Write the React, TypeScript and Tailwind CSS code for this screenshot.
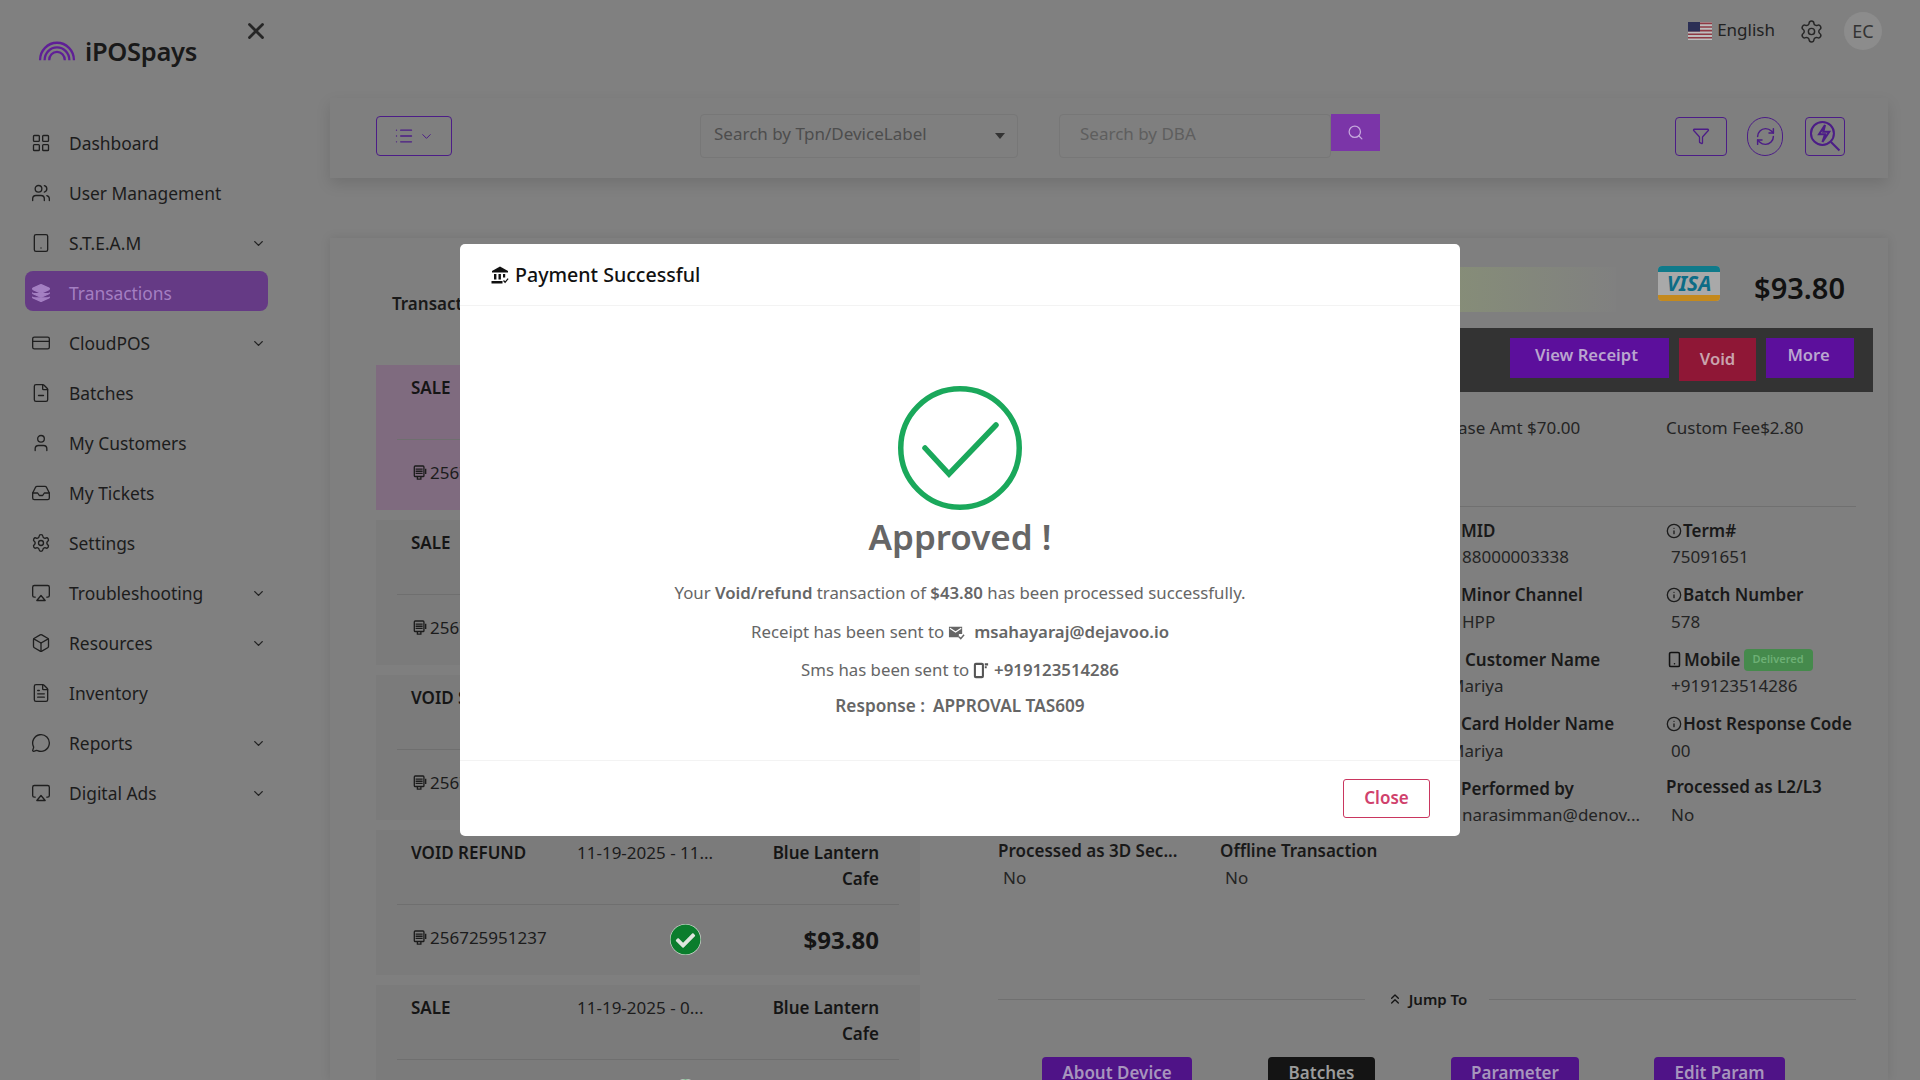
import React from "react";
import {
  LayoutGrid, Users, Tablet, Layers, CreditCard, FileMinus, User, Inbox, Settings, Airplay, Box, FileText,
  MessageCircle, ChevronDown, X, List, Filter, RefreshCw, Search, Smartphone, Info, ChevronsUp,
} from "lucide-react";
import { FaCheckCircle } from "react-icons/fa";

const nav: [string, any, boolean][] = [
  ["Dashboard", LayoutGrid, false],
  ["User Management", Users, false],
  ["S.T.E.A.M", Tablet, true],
  ["Transactions", Layers, false],
  ["CloudPOS", CreditCard, true],
  ["Batches", FileMinus, false],
  ["My Customers", User, false],
  ["My Tickets", Inbox, false],
  ["Settings", Settings, false],
  ["Troubleshooting", Airplay, true],
  ["Resources", Box, true],
  ["Inventory", FileText, false],
  ["Reports", MessageCircle, true],
  ["Digital Ads", Airplay, true],
];

function Terminal() {
  return (
    <svg viewBox="0 0 16 18" className="h-[16px] w-[14px] shrink-0" fill="none" stroke="#1c1c1c" strokeWidth="1.5">
      <rect x="1.5" y="1" width="11" height="12" rx="1" />
      <path d="M3 4.5h8M3 7h8M3 9.5h8M5 13v3h4v-3M14.5 4v6" />
    </svg>
  );
}

function Logo() {
  return (
    <svg viewBox="0 0 40 24" className="h-[22px] w-[38px]" fill="none" stroke="#5f1f96" strokeWidth="2.5">
      <path d="M1.5 22a18.5 19 0 0 1 37 0" />
      <path d="M6.5 22a13.5 14 0 0 1 27 0" />
      <path d="M11.5 22a8.5 9 0 0 1 17 0" />
    </svg>
  );
}

function Flag() {
  return (
    <svg viewBox="0 0 24 18" className="h-[18px] w-[24px]">
      <rect width="24" height="18" fill="#bdbdbd" />
      <path d="M0 1.4h24M0 5h24M0 8.6h24M0 12.2h24M0 15.8h24" stroke="#8e3a44" strokeWidth="1.6" />
      <rect width="12" height="9.5" fill="#2b2f55" />
    </svg>
  );
}

function ZapSearch() {
  return (
    <svg viewBox="0 0 40 40" className="h-[34px] w-[34px]" fill="none" stroke="#4c1d87" strokeWidth="2.4">
      <circle cx="17" cy="17" r="13.5" />
      <path d="M20 7l-7 11h7l-3 9 8-12h-7z" />
      <path d="M27 27l10 10" />
    </svg>
  );
}

function Bank() {
  return (
    <svg viewBox="0 0 18 18" className="h-[18px] w-[18px]" fill="#111">
      <path d="M9 0.5l8 4.5v1.5H1V5z" />
      <rect x="3" y="8" width="2.4" height="5.5" />
      <rect x="7.5" y="8" width="2.4" height="5.5" />
      <rect x="0.5" y="15" width="11" height="2.5" />
      <path d="M12.5 14.5l1.6 1.8 3-3.6" fill="none" stroke="#111" strokeWidth="1.3" />
      <rect x="12" y="8" width="2.2" height="3.5" />
    </svg>
  );
}

function MailFilled() {
  return (
    <svg viewBox="0 0 18 18" className="ml-[4px] h-[17px] w-[17px]">
      <path d="M1 3h14v7.5h-3.5v3.5H1z" fill="#666" />
      <path d="M2 4.5l6 4 6-4" fill="none" stroke="#fff" strokeWidth="1.2" />
      <path d="M11.5 13.5l2 2 3.5-4" fill="none" stroke="#666" strokeWidth="1.6" />
    </svg>
  );
}

function PhoneSignal() {
  return (
    <svg viewBox="0 0 18 18" className="ml-[4px] h-[17px] w-[17px]" fill="none" stroke="#555">
      <rect x="2" y="2" width="8.5" height="14" rx="1" strokeWidth="2.2" />
      <path d="M12.5 2.5h3.5M12.5 5.5h2" strokeWidth="2.2" />
    </svg>
  );
}

function Item({ type, date, id, tone }: { type: string; date: string; id: string; tone: string }) {
  return (
    <div className={`h-[145px] mb-[10px] px-[21px] shrink-0 ${tone}`}>
      <div className="h-[75px] flex items-start pt-[10px] pl-[14px] pr-[20px] border-b border-[#6f6f6f] leading-[26px] text-[#151515]">
        <div className="w-[166px] font-semibold text-[17px]">{type}</div>
        <div className="w-[156px] text-[17px] text-[#1c1c1c] whitespace-nowrap">{date}</div>
        <div className="flex-1 text-right font-semibold text-[17px]">Blue Lantern<br />Cafe</div>
      </div>
      <div className="h-[69px] flex items-center pl-[14px] pr-[20px] text-[#1c1c1c]">
        <div className="w-[257px] flex items-center text-[17px] -mt-[4px] ml-[2px]"><Terminal /><span className="ml-[3px]">{id}</span></div>
        <FaCheckCircle className="h-[31px] w-[31px] text-[#0b7d2d] bg-[#dfe6df] rounded-full" />
        <div className="flex-1 text-right font-bold text-[24px] text-[#151515]">$93.80</div>
      </div>
    </div>
  );
}

function Field({ label, value, icon, valueClass = "ml-[5px]", labelClass = "", badge }: { label: string; value: string; icon?: React.ReactNode; valueClass?: string; labelClass?: string; badge?: boolean }) {
  return (
    <div className="w-[222px] h-[64.5px] shrink-0">
      <div className={`h-[27px] flex items-center font-semibold text-[17px] text-[#191919] whitespace-nowrap ${labelClass}`}>
        {icon}
        <span>{label}</span>
        {badge && <span className="ml-[3px] h-[22px] px-[9px] flex items-center rounded-sm bg-[#458a4c] text-[#6db075] text-[11px] font-semibold">Delivered</span>}
      </div>
      <div className={`h-[26px] flex items-center text-[17px] text-[#242424] whitespace-nowrap ${valueClass}`}>{value}</div>
    </div>
  );
}

const info = <Info className="h-[16px] w-[16px] mr-[1px] text-[#1c1c1c]" />;
const wideInfo = <Info className="h-[16px] w-[16px] mr-[5px] text-[#1c1c1c]" />;

export default function App() {
  return (
    <div className="relative flex h-[1080px] w-[1920px] overflow-hidden bg-[#808080] font-['Noto_Sans',sans-serif] text-[#1a1a1a]">
      {/* sidebar */}
      <aside className="w-[330px] shrink-0 flex flex-col pl-[25px]">
        <div className="relative h-[118px]">
          <div className="flex items-center pt-[32px] pl-[13px]">
            <Logo />
            <span className="ml-[9px] text-[25.5px] font-semibold tracking-[-0.3px] text-[#191919]">iPOSpays</span>
          </div>
          <X className="absolute left-[218px] top-[18px] h-[26px] w-[26px] text-[#262626]" strokeWidth={2.6} />
        </div>
        {nav.map(([name, Icon, chev]) => {
          const active = name === "Transactions";
          return (
            <div key={name} className={`flex h-[40px] w-[243px] items-center rounded-lg pl-[6px] pr-[2px] shrink-0 ${active ? "mt-[3px] mb-[7px] pt-[4px] bg-[#653a85]" : "my-[5px]"}`}>
              <Icon className={`h-[20px] w-[20px] shrink-0 ${active ? "text-[#a47fc2] fill-[#a47fc2]" : "text-[#1f1f1f]"}`} strokeWidth={1.6} />
              <span className={`ml-[18px] flex-1 text-[17.4px] ${active ? "text-[#a47fc2]" : "text-[#1c1c1c]"}`}>{name}</span>
              {chev && <ChevronDown className="h-[15px] w-[15px] text-[#222]" strokeWidth={2.2} />}
            </div>
          );
        })}
      </aside>

      {/* main */}
      <main className="flex-1 flex flex-col min-w-0">
        <div className="h-[98px] shrink-0 flex justify-end items-start pt-[12px] pr-[38px]">
          <div className="flex items-center mt-[8px] text-[17px] text-[#222]"><Flag /><span className="ml-[5px] -mt-[3px]">English</span></div>
          <Settings className="ml-[24px] mt-[7px] h-[25px] w-[25px] text-[#262626]" strokeWidth={1.4} />
          <div className="ml-[20px] h-[38px] w-[38px] rounded-full bg-[#8c8c8c] flex items-center justify-center text-[18px] text-[#333]">EC</div>
        </div>

        <div className="h-[80px] shrink-0 mr-[32px] flex items-center pb-[4px] pl-[46px] pr-[43px] bg-[#7f7f7f] shadow-[0_6px_14px_rgba(0,0,0,0.12)]">
          <div className="h-[40px] w-[76px] border border-[#4c1d87] rounded flex items-center justify-center gap-[5px]">
            <List className="h-[20px] w-[20px] text-[#4c1d87]" strokeWidth={1.6} />
            <ChevronDown className="h-[15px] w-[15px] text-[#4c1d87]" strokeWidth={1.6} />
          </div>
          <div className="ml-[248px] h-[44px] w-[318px] border border-[#777] rounded-sm flex items-center justify-between pb-[4px] pl-[13px] pr-[12px] text-[17px] text-[#4d4d4d]">
            <span>Search by Tpn/DeviceLabel</span>
            <span className="mt-[4px] border-x-[5px] border-t-[6px] border-x-transparent border-t-[#333]" />
          </div>
          <div className="ml-[41px] h-[44px] w-[272px] border border-[#777] rounded-sm flex items-center pb-[4px] pl-[20px] text-[17px] text-[#5e5e5e]">Search by DBA</div>
          <div className="h-[37px] w-[49px] mb-[7px] bg-[#7b35a8] flex items-center justify-center">
            <Search className="h-[17px] w-[17px] text-[#c5a8dc]" strokeWidth={1.8} />
          </div>
          <div className="ml-auto h-[39px] w-[52px] border border-[#4c1d87] rounded-sm flex items-center justify-center">
            <Filter className="h-[18px] w-[18px] text-[#4c1d87]" strokeWidth={1.7} />
          </div>
          <div className="ml-[20px] h-[39px] w-[36px] border border-[#4c1d87] rounded-full flex items-center justify-center">
            <RefreshCw className="h-[21px] w-[21px] text-[#4c1d87]" strokeWidth={1.7} />
          </div>
          <div className="ml-[22px] h-[39px] w-[40px] border border-[#4c1d87] rounded-sm flex items-center justify-center">
            <ZapSearch />
          </div>
        </div>

        <div className="mt-[60px] mr-[32px] flex-1 min-h-0 flex overflow-hidden bg-[#7f7f7f] shadow-[0_0_10px_rgba(0,0,0,0.1)]">
          {/* list */}
          <div className="w-[590px] shrink-0 pl-[46px] flex flex-col">
            <div className="mt-[54px] h-[24px] shrink-0 ml-[16px] flex items-center text-[17px] font-semibold text-[#191919]">Transactions</div>
            <div className="mt-[49px] shrink-0">
              <Item type="SALE" date="11-19-2025 - 11..." id="256725951237" tone="bg-[#7f6b7f]" />
              <Item type="SALE" date="11-19-2025 - 11..." id="256725951237" tone="bg-[#7b7b7b]" />
              <Item type="VOID SALE" date="11-19-2025 - 11..." id="256725951237" tone="bg-[#7b7b7b]" />
              <Item type="VOID REFUND" date="11-19-2025 - 11..." id="256725951237" tone="bg-[#7b7b7b]" />
              <Item type="SALE" date="11-19-2025 - 0..." id="256725951237" tone="bg-[#7b7b7b]" />
            </div>
          </div>

          {/* detail */}
          <div className="ml-[61px] w-[892px] shrink-0 flex flex-col">
            <div className="h-[90px] shrink-0 flex items-start justify-end pr-[28px] pt-[28px]">
              <div className="h-[45px] w-[160px] mt-[1px] mr-[42px] bg-gradient-to-r from-[#868d78] to-[#808080]" />
              <div className="h-[35px] w-[62px] flex flex-col rounded-sm overflow-hidden bg-[#a9a9a9]">
                <div className="h-[6px] bg-[#0f7a8a]" />
                <div className="flex-1 flex items-center justify-center text-[21px] font-bold italic text-[#0d6c86] leading-none">VISA</div>
                <div className="h-[6px] bg-[#c4891d]" />
              </div>
              <div className="ml-[34px] text-[29px] font-semibold leading-none text-[#111] mt-[7px]">$93.80</div>
            </div>
            <div className="h-[64px] shrink-0 bg-[#333333] flex items-start justify-end pt-[10px] pr-[19px] gap-[9px] text-[16.6px] font-semibold text-[#b9a5cf]">
              <div className="h-[40px] w-[159px] bg-[#5c0f9c] flex items-center justify-center pb-[5px] pr-[6px]">View Receipt</div>
              <div className="h-[43px] w-[77px] ml-[1px] bg-[#8f1736] flex items-center justify-center text-[#c9a3ad]">Void</div>
              <div className="h-[40px] w-[88px] ml-[1px] bg-[#5c0f9c] flex items-center justify-center pb-[5px] pr-[3px]">More</div>
            </div>
            <div className="h-[115px] shrink-0 border-b border-[#707070] ml-[17px] mr-[17px]">
              <div className="flex pt-[23px] text-[17px] text-[#242424]">
                <div className="w-[446px]" />
                <div className="w-[222px] pl-[3px]">Base Amt $70.00</div>
                <div className="whitespace-nowrap">Custom Fee$2.80</div>
              </div>
            </div>
            <div className="ml-[17px] shrink-0 pt-[10px] w-[875px]">
              <div className="flex">
                <div className="w-[446px] shrink-0" />
                <div className="w-[444px] shrink-0 flex flex-wrap">
                  <Field label="MID" value="88000003338" icon={info} valueClass="ml-[18px]" />
                  <Field label="Term#" value="75091651" icon={info} />
                  <Field label="Minor Channel" value="HPP" icon={info} valueClass="ml-[18px]" />
                  <Field label="Batch Number" value="578" icon={info} />
                  <Field label="Customer Name" value="Mariya" icon={wideInfo} />
                  <Field label="Mobile" value="+919123514286" badge icon={<Smartphone className="h-[17px] w-[17px] mr-[1px] text-[#111]" strokeWidth={2.2} />} />
                  <Field label="Card Holder Name" value="Mariya" icon={info} />
                  <Field label="Host Response Code" value="00" icon={info} />
                  <Field label="Performed by" value="narasimman@denov..." icon={info} valueClass="ml-[18px]" />
                  <Field label="Processed as L2/L3" value="No" labelClass="-mt-[2px] mb-[2px]" />
                </div>
              </div>
              <div className="flex -mt-[2px]">
                <Field label="Processed as 3D Sec..." value="No" />
                <Field label="Offline Transaction" value="No" />
              </div>
            </div>
            <div className="ml-[17px] mr-[17px] shrink-0 mt-[86px] flex items-center gap-[22px] text-[15px] font-semibold text-[#151515]">
              <div className="flex-1 border-t border-[#707070]" />
              <div className="flex items-center gap-[6px]"><ChevronsUp className="h-[16px] w-[16px]" />Jump To</div>
              <div className="flex-1 border-t border-[#707070]" />
            </div>
            <div className="mt-[46px] ml-[61px] shrink-0 flex items-start text-[17px] font-semibold text-[#a795bd]">
              <div className="h-[40px] pb-[8px] w-[150px] rounded-sm bg-[#4f1387] flex items-center justify-center">About Device</div>
              <div className="h-[40px] pb-[8px] w-[107px] ml-[76px] rounded-sm bg-[#141414] flex items-center justify-center text-[#9b9b9b]">Batches</div>
              <div className="h-[40px] pb-[8px] w-[128px] ml-[76px] rounded-sm bg-[#4f1387] flex items-center justify-center">Parameter</div>
              <div className="h-[40px] pb-[8px] w-[131px] ml-[75px] rounded-sm bg-[#4f1387] flex items-center justify-center">Edit Param</div>
            </div>
          </div>
        </div>
      </main>

      {/* modal */}
      <div className="absolute left-[460px] top-[244px] w-[1000px] h-[592px] bg-white rounded-[5px] flex flex-col">
        <div className="h-[62px] shrink-0 border-b border-[#f3f3f3] flex items-center pl-[31px] pt-[1px] text-[#111]">
          <Bank />
          <span className="ml-[6px] text-[19.6px] font-medium">Payment Successful</span>
        </div>
        <div className="h-[454px] shrink-0 flex flex-col items-center pt-[80px] text-[16.8px] text-[#666]">
          <svg viewBox="0 0 124 124" className="h-[124px] w-[124px]" fill="none" stroke="#1aa85b" strokeWidth="5.5">
            <circle cx="62" cy="62" r="59.25" />
            <path d="M27 62l24 26 47-49" strokeLinecap="round" />
          </svg>
          <div className="mt-[2px] h-[50px] leading-[50px] text-[35px] font-semibold text-[#666]">Approved !</div>
          <div className="mt-[17px] h-[28px] leading-[28px]">Your <b className="font-semibold">Void/refund</b> transaction of <b className="font-semibold">$43.80</b> has been processed successfully.</div>
          <div className="mt-[11px] h-[28px] flex items-center">Receipt has been sent to <MailFilled /><b className="ml-[9px] font-semibold">msahayaraj@dejavoo.io</b></div>
          <div className="mt-[10px] h-[28px] flex items-center">Sms has been sent to <PhoneSignal /><b className="ml-[4px] font-semibold">+919123514286</b></div>
          <div className="mt-[8px] h-[28px] text-[17.2px] font-semibold flex items-center"><span>Response :</span><span className="ml-[8px]">APPROVAL TAS609</span></div>
        </div>
        <div className="flex-1 border-t border-[#f3f3f3] flex items-start justify-end pt-[18px] pr-[30px]">
          <div className="h-[39px] w-[87px] border border-[#c9365f] rounded-[3px] flex items-center justify-center pb-[2px] text-[17px] font-semibold text-[#d0416c]">Close</div>
        </div>
      </div>
    </div>
  );
}
